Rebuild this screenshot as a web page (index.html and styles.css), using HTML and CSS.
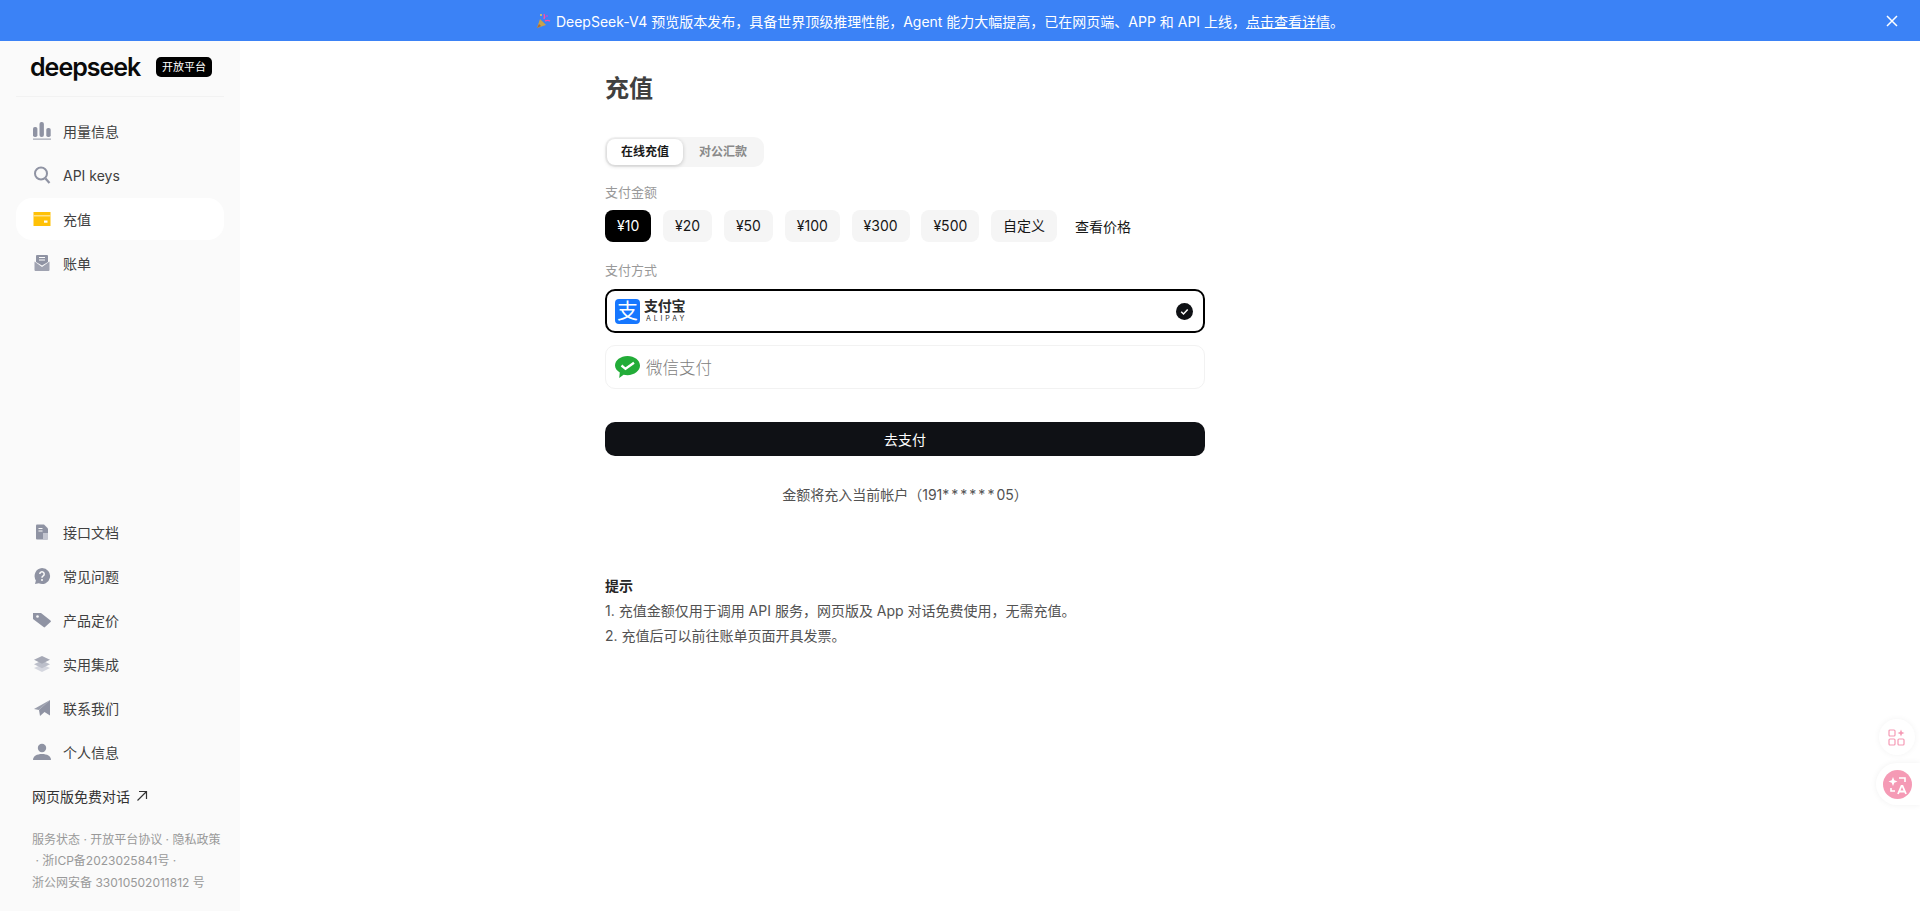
FILE: index.html
```html
<!DOCTYPE html>
<html lang="zh-CN">

<head>
    <meta charset="UTF-8">
    <title>DeepSeek 开放平台</title>
    <link rel="stylesheet" href="styles.css">
</head>

<body>
    <div class="banner">
        <svg class="banner-icon" width="16" height="16" viewBox="0 0 16 16">
            <path d="M2 15l3-9 6 6z" fill="#c9a24a" />
            <path d="M4 11l2 2-4 2z" fill="#a8683a" />
            <path d="M9 6c1-2 1-3 0-5" stroke="#ff4fa3" stroke-width="1.4" fill="none" />
            <path d="M10 8c2-1 3-1 5 0" stroke="#ff4fa3" stroke-width="1.4" fill="none" />
            <circle cx="12" cy="3" r="1.1" fill="#b44be0" />
            <circle cx="6" cy="2" r="0.9" fill="#ffd23f" />
        </svg>
        <span>DeepSeek-V4 预览版本发布，具备世界顶级推理性能，Agent 能力大幅提高，已在网页端、APP 和 API 上线，<a href="#">点击查看详情</a>。</span>
        <svg class="banner-close" width="14" height="14" viewBox="0 0 14 14">
            <path d="M2 2l10 10M12 2L2 12" stroke="#fff" stroke-width="1.5" fill="none" />
        </svg>
    </div>

    <div class="layout">
        <aside class="sidebar">
            <div class="brand">
                <span class="logo">deepseek</span>
                <span class="badge">开放平台</span>
            </div>

            <nav class="nav">
                <a class="nav-item" href="#">
                    <svg viewBox="0 0 18 18">
                        <rect x="0" y="5" width="4.400" height="10" rx="1.800" />
                        <rect x="6.500" y="0" width="4.400" height="15" rx="2" />
                        <rect x="13.300" y="6" width="4.400" height="9" rx="1.800" />
                        <rect x="0" y="16.600" width="18" height="1" />
                    </svg>
                    用量信息
                </a>
                <a class="nav-item" href="#">
                    <svg viewBox="0 0 18 18">
                        <circle cx="8" cy="7.500" r="6" fill="none" stroke="#8f93a3" stroke-width="2" />
                        <path d="M12.500 12.500l4 4.500" stroke="#8f93a3" stroke-width="2.200" />
                    </svg>
                    API keys
                </a>
                <a class="nav-item active" href="#">
                    <svg viewBox="0 0 18 18">
                        <rect x="0.500" y="2" width="17" height="14" fill="#ffc107" />
                        <rect x="0.500" y="5.200" width="17" height="1.200" fill="#ffe9a6" />
                        <rect x="11" y="10.500" width="3.500" height="2.200" fill="#fff" />
                    </svg>
                    充值
                </a>
                <a class="nav-item" href="#">
                    <svg viewBox="0 0 18 18">
                        <path d="M4 1h10a1 1 0 0 1 1 1v6l-6 3.500L3 8V2a1 1 0 0 1 1-1z" />
                        <path d="M1.500 7.500L9 13l7.500-5.500V16a1 1 0 0 1-1 1h-13a1 1 0 0 1-1-1z" opacity="0.85" />
                        <path d="M6 3.500h6M6 6h6" stroke="#fafafa" stroke-width="1" />
                    </svg>
                    账单
                </a>
            </nav>

            <nav class="nav nav-bottom">
                <a class="nav-item" href="#">
                    <svg viewBox="0 0 18 18">
                        <path d="M4 1.500h7l4 4v10a1 1 0 0 1-1 1H4a1 1 0 0 1-1-1v-13a1 1 0 0 1 1-1z" />
                        <rect x="10" y="10" width="5" height="6.500" fill="#c4c6d0" />
                        <path d="M5.500 5.500h4M5.500 8h4" stroke="#fafafa" stroke-width="1.200" />
                    </svg>
                    接口文档
                </a>
                <a class="nav-item" href="#">
                    <svg viewBox="0 0 18 18">
                        <path d="M9 1a8 8 0 1 1-3.200 15.300L2 17l.9-3.600A8 8 0 0 1 9 1z" />
                        <path d="M6.800 7a2.200 2.200 0 1 1 3.400 1.900c-.8.500-1.200.9-1.200 1.800" stroke="#fafafa" stroke-width="1.500" fill="none" />
                        <circle cx="9" cy="13" r="1" fill="#fafafa" />
                    </svg>
                    常见问题
                </a>
                <a class="nav-item" href="#">
                    <svg viewBox="0 0 18 18">
                        <path d="M0 2h8l9.500 7.600a1 1 0 0 1 0 1.500l-5.500 5a1 1 0 0 1-1.400 0L0 8z" />
                        <circle cx="4.500" cy="5.500" r="1.300" fill="#fafafa" />
                    </svg>
                    产品定价
                </a>
                <a class="nav-item" href="#">
                    <svg viewBox="0 0 18 18">
                        <path d="M9 9.500L17 13l-8 4-8-4z" fill="#d5d7df" />
                        <path d="M9 5.500l8 3.700-8 4-8-4z" fill="#bcbfca" />
                        <path d="M9 1l8 3.700-8 4-8-4z" fill="#a5a8b5" />
                    </svg>
                    实用集成
                </a>
                <a class="nav-item" href="#">
                    <svg viewBox="0 0 18 18">
                        <path d="M17 1v15.500l-5.500-3.500L7 17l-1-6z" />
                        <path d="M17 1L1 10l5 1z" opacity="0.9" />
                    </svg>
                    联系我们
                </a>
                <a class="nav-item" href="#">
                    <svg viewBox="0 0 18 18">
                        <circle cx="9" cy="5" r="4.200" />
                        <path d="M0 17c0-4 4-6 9-6s9 2 9 6z" />
                    </svg>
                    个人信息
                </a>
                <a class="chat-link" href="#">
                    网页版免费对话
                    <svg width="12" height="12" viewBox="0 0 12 12">
                        <path d="M1.500 10.500L10.500 1.500M3 1.500h7.500V9" stroke="#333" stroke-width="1.200" fill="none" />
                    </svg>
                </a>
            </nav>

            <div class="legal">
                <div>服务状态 · 开放平台协议 · 隐私政策</div>
                <div>&nbsp;· 浙ICP备2023025841号 ·</div>
                <div>浙公网安备 33010502011812 号</div>
            </div>
        </aside>

        <main class="main">
            <h1 class="title">充值</h1>

            <div class="tabs">
                <span class="tab active">在线充值</span>
                <span class="tab">对公汇款</span>
            </div>

            <div class="label">支付金额</div>
            <div class="chips">
                <span class="chip active">¥10</span>
                <span class="chip">¥20</span>
                <span class="chip">¥50</span>
                <span class="chip">¥100</span>
                <span class="chip">¥300</span>
                <span class="chip">¥500</span>
                <span class="chip">自定义</span>
                <a class="price-link" href="#">查看价格</a>
            </div>

            <div class="label label-pay">支付方式</div>
            <div class="pay-option selected">
                <span class="alipay-mark">支</span>
                <span class="alipay-name">
                    <b>支付宝</b>
                    <i>ALIPAY</i>
                </span>
                <svg class="pay-check" width="17" height="17" viewBox="0 0 17 17">
                    <circle cx="8.500" cy="8.500" r="8.500" fill="#0f1115" />
                    <path d="M5.200 8.800l2.300 2.200 4.200-4.500" stroke="#fff" stroke-width="1.500" fill="none" />
                </svg>
            </div>
            <div class="pay-option">
                <svg class="wechat-mark" width="25" height="22" viewBox="0 0 25 22">
                    <path d="M12.500 0C19.400 0 25 4.300 25 9.600s-5.600 9.600-12.500 9.600c-1.400 0-2.700-.2-3.900-.5L4.200 22l.6-5.400C2 14.900 0 12.400 0 9.600 0 4.300 5.600 0 12.500 0z" fill="#22ac38" />
                    <path d="M6.500 9.500l4 3.300 8.500-6" stroke="#fff" stroke-width="2.300" fill="none" />
                </svg>
                <span class="wechat-name">微信支付</span>
            </div>

            <button class="pay-button">去支付</button>
            <p class="account-note">金额将充入当前帐户（191<span class="stars">******</span>05）</p>

            <div class="tips">
                <strong>提示</strong>
                <p>1. 充值金额仅用于调用 API 服务，网页版及 App 对话免费使用，无需充值。</p>
                <p>2. 充值后可以前往账单页面开具发票。</p>
            </div>
        </main>
    </div>

    <div class="float-btn float-apps">
        <svg width="18" height="18" viewBox="0 0 18 18" fill="none" stroke="#f59ab5" stroke-width="1.200">
            <rect x="1" y="2" width="6" height="6" rx="1" />
            <rect x="1" y="11" width="6" height="6" rx="1" />
            <rect x="10" y="11" width="6" height="6" rx="1" />
            <path d="M13 1.500l1 2.500 2.500 1-2.500 1-1 2.500-1-2.500-2.500-1 2.500-1z" fill="#f59ab5" stroke="none" />
        </svg>
    </div>
    <div class="float-btn float-translate">
        <span class="translate-circle">
            <svg width="29" height="29" viewBox="0 0 29 29" fill="none">
                <path d="M10 7l1.300 3.200L14.500 11.500l-3.200 1.300L10 16l-1.300-3.200L5.500 11.500l3.200-1.300z" fill="#fff" />
                <path d="M16 8h6v4M8 18v3h4" stroke="#fff" stroke-width="1.600" />
                <path d="M15 24l3.500-8h1l3.500 8M16.500 21.500h5" stroke="#fff" stroke-width="1.800" />
            </svg>
        </span>
    </div>
</body>

</html>
```

FILE: styles.css
```css
* {
    margin: 0;
    padding: 0;
    box-sizing: border-box;
}

body {
    font-family: Inter, "Noto Sans CJK SC", sans-serif;
    font-size: 14px;
    color: #404040;
    background-color: #fff;
    height: 911px;
    overflow: hidden;
}

a {
    color: inherit;
    text-decoration: none;
}

.banner {
    height: 41px;
    background-color: #3b82f6;
    color: #fff;
    display: flex;
    justify-content: center;
    align-items: center;
    gap: 5px;
    padding-right: 41px;
    position: relative;
}

.banner a {
    text-decoration: underline;
}

.banner-close {
    position: absolute;
    right: 21px;
    top: 14px;
}

.layout {
    display: flex;
    height: 870px;
}

.sidebar {
    width: 240px;
    background-color: #fafafa;
    display: flex;
    flex-direction: column;
    padding: 0 16px;
}

.brand {
    height: 56px;
    border-bottom: 1px solid #f2f2f2;
    display: flex;
    align-items: center;
    padding: 0 14px 3px;
}

.logo {
    font-size: 25px;
    font-weight: 600;
    letter-spacing: -1px;
    line-height: 1;
    color: #0a0a0a;
    width: 126px;
    flex-shrink: 0;
}

.badge {
    background-color: #000;
    color: #fff;
    font-size: 11px;
    line-height: 20px;
    padding: 0 6px;
    border-radius: 5px;
    white-space: nowrap;
}

.nav {
    margin-top: 12px;
    display: flex;
    flex-direction: column;
}

.nav-bottom {
    margin-top: auto;
}

.nav-item {
    height: 44px;
    display: flex;
    align-items: center;
    gap: 12px;
    padding-left: 17px;
    border-radius: 16px;
}

.nav-item svg {
    width: 18px;
    height: 18px;
    fill: #8f93a3;
    flex-shrink: 0;
}

.nav-item.active {
    background-color: #fff;
    height: 42px;
    margin: 1px 0;
}

.chat-link {
    height: 44px;
    display: flex;
    align-items: center;
    gap: 6px;
    padding-left: 16px;
    color: #333;
}

.legal {
    margin-top: 11px;
    padding: 0 0 18px 16px;
    font-size: 12px;
    line-height: 21.5px;
    color: #999;
    white-space: nowrap;
}

.main {
    flex: 1;
    padding: 32px 0 0 365px;
}

.title {
    font-size: 24px;
    line-height: 32px;
    font-weight: 700;
    color: #404040;
}

.tabs {
    margin-top: 32px;
    display: inline-flex;
    gap: 2px;
    height: 30px;
    padding: 2px 3px 2px 2px;
    background-color: #f5f5f5;
    border-radius: 10px;
}

.tab {
    width: 76px;
    font-size: 12px;
    font-weight: 700;
    line-height: 26px;
    text-align: center;
    color: #8a8a8a;
    border-radius: 8px;
}

.tab.active {
    background-color: #fff;
    color: #1a1a1a;
    box-shadow: 0 1px 4px rgba(0, 0, 0, 0.2);
}

.label {
    margin-top: 15px;
    font-size: 13px;
    line-height: 20px;
    color: #999;
}

.label-pay {
    margin-top: 18px;
}

.chips {
    margin-top: 8px;
    display: flex;
    align-items: center;
    gap: 11.8px;
}

.chip {
    height: 32px;
    line-height: 32px;
    padding: 0 12px;
    background-color: #f5f5f5;
    border-radius: 8px;
    color: #171717;
}

.chip.active {
    background-color: #000;
    color: #fff;
}

.price-link {
    margin-left: 6px;
    color: #171717;
}

.pay-option {
    width: 600px;
    height: 44px;
    border: 1px solid #f2f2f2;
    border-radius: 10px;
    display: flex;
    align-items: center;
    padding-left: 9px;
    margin-bottom: 12px;
}

.pay-option.selected {
    margin-top: 9px;
    border: 2px solid #000;
    padding-left: 8px;
    padding-right: 10px;
}

.alipay-mark {
    width: 25px;
    height: 25px;
    background-color: #1677ff;
    border-radius: 4px;
    color: #fff;
    font-size: 21px;
    line-height: 24px;
    text-align: center;
    flex-shrink: 0;
}

.alipay-name {
    margin-left: 4px;
    display: flex;
    flex-direction: column;
    color: #2b2b2b;
}

.alipay-name b {
    font-size: 14px;
    line-height: 16px;
    letter-spacing: -0.2px;
}

.alipay-name i {
    font-style: normal;
    font-size: 7px;
    line-height: 10px;
    letter-spacing: 2.900px;
    margin-left: 2px;
}

.pay-check {
    margin-left: auto;
}

.wechat-name {
    margin-left: 6px;
    font-size: 16.5px;
    font-weight: 300;
    color: #808080;
}

.pay-button {
    display: block;
    width: 600px;
    height: 34px;
    margin-top: 33px;
    border: none;
    border-radius: 10px;
    background-color: #0f1115;
    color: #fff;
    font-family: inherit;
    font-size: 14px;
}

.account-note {
    width: 600px;
    margin-top: 28px;
    text-align: center;
    line-height: 22px;
    color: #525252;
}

.stars {
    letter-spacing: 2px;
}

.tips {
    margin-top: 67px;
    line-height: 25px;
    color: #525252;
}

.tips strong {
    display: block;
    font-weight: 600;
    color: #262626;
}

.float-btn {
    position: absolute;
    width: 36px;
    height: 36px;
    display: flex;
    align-items: center;
    justify-content: center;
    background-color: #fff;
    border-radius: 50%;
}

.float-apps {
    right: 5px;
    top: 719px;
    box-shadow: 0 0 6px rgba(0, 0, 0, 0.05);
}

.float-translate {
    right: 0;
    top: 763px;
    width: 44px;
    height: 42px;
    padding-right: 2px;
    border-radius: 21px 0 0 21px;
    box-shadow: 0 0 6px rgba(0, 0, 0, 0.06);
}

.translate-circle {
    width: 29px;
    height: 29px;
    border-radius: 50%;
    background-color: #f59ab5;
}
```
